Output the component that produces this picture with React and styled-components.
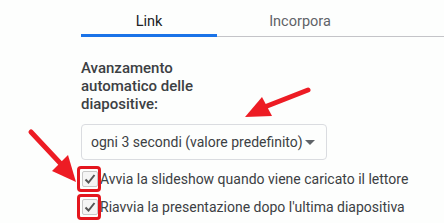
import React from 'react';
import styled, { createGlobalStyle } from 'styled-components';

const Global = createGlobalStyle`
  html, body { margin: 0; padding: 0; background: #fff; }
  body { font-family: Roboto, "Noto Sans", sans-serif; overflow: hidden; }
`

const Page = styled.div`
  position: relative;
  width: 444px;
  height: 223px;
  overflow: hidden;
  background: #fdfefd;
  padding-left: 81px;
  box-sizing: border-box;
`

const Tabs = styled.div`
  display: flex;
  width: 400px;
  height: 37px;
  border-bottom: 1px solid #c4c4c8;
  box-sizing: border-box;
`

const Tab = styled.div`
  width: ${p => p.w}px;
  display: flex;
  align-items: center;
  justify-content: center;
  padding-top: 5px;
  font-size: 14.5px;
  color: ${p => p.active ? '#202124' : '#5f6368'};
  box-shadow: ${p => p.active ? 'inset 0 -3px 0 #1a73e8' : 'none'};
  margin-bottom: -1px;
`

const Body = styled.div`
  padding-top: 22px;
  display: flex;
  flex-direction: column;
`

const Label = styled.div`
  width: 140px;
  font-size: 15px;
  line-height: 18px;
  font-weight: 500;
  color: #3c4043;
`

const Select = styled.div`
  margin-top: 11px;
  width: 246px;
  height: 36px;
  box-sizing: border-box;
  border: 1px solid #dadce0;
  border-radius: 4px;
  display: flex;
  align-items: center;
  justify-content: space-between;
  padding: 0 9px 0 9px;
  font-size: 14px;
  white-space: nowrap;
  color: #3c4043;
`

const Caret = styled.span`
  width: 0;
  height: 0;
  border-left: 5px solid transparent;
  border-right: 5px solid transparent;
  border-top: 5px solid #5f6368;
  margin-right: 2px;
`

const Options = styled.div`
  margin-top: 10px;
  display: flex;
  flex-direction: column;
  gap: 10px;
`

const Row = styled.div`
  display: flex;
  align-items: center;
  gap: 2px;
  font-size: 14px;
  white-space: nowrap;
  color: #3c4043;
  height: 18px;
`

const Box = styled.span`
  position: relative;
  width: 16px;
  height: 16px;
  margin-left: 1px;
  box-sizing: border-box;
  border: 1px solid #c8c8c8;
  border-radius: 2px;
  background: #f5f5f5;
  display: flex;
  align-items: center;
  justify-content: center;
  &::after {
    content: '';
    position: absolute;
    left: -6px;
    top: -6px;
    width: 24px;
    height: 26px;
    border: 3.5px solid #e4161e;
    border-radius: 4px;
    box-sizing: border-box;
  }
`

const Arrows = styled.svg`
  position: absolute;
  left: 0;
  top: 0;
  pointer-events: none;
`

function Check() {
  return <Box>
    <svg width="14" height="14" viewBox="0 0 14 14">
      <path d="M2.5 7.5 L5.5 10.5 L11.5 3" fill="none" stroke="#555" strokeWidth="2" />
    </svg>
  </Box>
}

export default function App() {
  return <>
    <Global />
    <Page>
      <Tabs>
        <Tab active w={136}>Link</Tab>
        <Tab w={166}>Incorpora</Tab>
      </Tabs>
      <Body>
        <Label>Avanzamento automatico delle diapositive:</Label>
        <Select>
          ogni 3 secondi (valore predefinito)
          <Caret />
        </Select>
        <Options>
          <Row><Check />Avvia la slideshow quando viene caricato il lettore</Row>
          <Row><Check />Riavvia la presentazione dopo l'ultima diapositiva</Row>
        </Options>
      </Body>
      <Arrows width="444" height="223" viewBox="0 0 444 223">
        <line x1="308" y1="90" x2="262" y2="108" stroke="#ed1c24" strokeWidth="5" strokeLinecap="round" />
        <polygon points="245,117 262,97 272,116" fill="#ed1c24" />
        <line x1="31" y1="132" x2="61" y2="164" stroke="#ed1c24" strokeWidth="5" strokeLinecap="round" />
        <polygon points="76,182 52,171 68,155" fill="#ed1c24" />
      </Arrows>
    </Page>
  </>
}
